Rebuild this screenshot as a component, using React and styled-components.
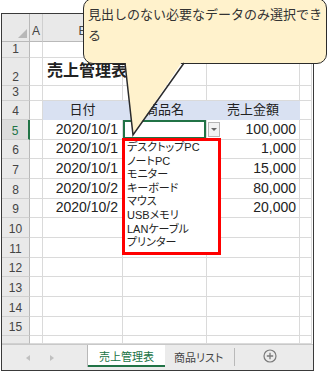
import React from 'react';
import styled, { createGlobalStyle } from 'styled-components';

const GlobalStyle = createGlobalStyle`
  body {
    margin: 0;
    background: #fff;
    font-family: "Liberation Sans", "Noto Sans CJK JP", sans-serif;
  }
`;

const COLS = '28px 13px 80px 84px 93px 12px';
const GREEN = '#217346';
const GRID = '#dadada';

const Page = styled.div`
  position: relative;
  width: 328px;
  height: 372px;
  padding: 13px 0 0 1px;
  box-sizing: border-box;
  overflow: hidden;
`;

const Frame = styled.div`
  width: 313px;
  height: 358px;
  box-sizing: border-box;
  border: 1px solid #3a3a3a;
  display: flex;
  flex-direction: column;
  background: #fff;
`;

const Sheet = styled.div`
  flex: 1;
  overflow: hidden;
`;

const Row = styled.div`
  display: grid;
  grid-template-columns: ${COLS};
  height: ${(p) => p.$h}px;
`;

const Corner = styled.div`
  background: #e9e9e9;
  border-right: 1px solid #b9b9b9;
  border-bottom: 1px solid #b9b9b9;
  box-sizing: border-box;
  display: flex;
  align-items: flex-end;
  justify-content: flex-end;
  padding: 0 2px 3px 0;
  &::after {
    content: '';
    border-left: 9px solid transparent;
    border-bottom: 9px solid #b8b8b8;
  }
`;

const ColHead = styled.div`
  background: ${(p) => (p.$active ? '#d6d6d6' : '#e9e9e9')};
  color: ${(p) => (p.$active ? GREEN : '#444')};
  border-right: 1px solid #cfcfcf;
  border-bottom: ${(p) => (p.$active ? `2px solid ${GREEN}` : '1px solid #b9b9b9')};
  box-sizing: border-box;
  display: flex;
  align-items: flex-end;
  justify-content: center;
  padding-bottom: 3px;
  font-size: 12px;
  overflow: hidden;
`;

const RowHead = styled.div`
  background: ${(p) => (p.$active ? '#dcdcdc' : '#e9e9e9')};
  color: ${(p) => (p.$active ? GREEN : '#444')};
  border-right: ${(p) => (p.$active ? `2px solid ${GREEN}` : '1px solid #b9b9b9')};
  border-bottom: 1px solid #d0d0d0;
  box-sizing: border-box;
  display: flex;
  align-items: flex-end;
  justify-content: center;
  padding-bottom: 2px;
  font-size: 12px;
  line-height: 12px;
  overflow: hidden;
`;

const Cell = styled.div`
  position: relative;
  box-sizing: border-box;
  border-right: 1px solid ${(p) => p.$fill || GRID};
  border-bottom: 1px solid ${(p) => p.$fill || GRID};
  background: ${(p) => p.$fill || 'transparent'};
  display: flex;
  align-items: flex-end;
  justify-content: ${(p) => p.$align || 'flex-start'};
  padding: 0 ${(p) => p.$padRight || 4}px 1px 4px;
  font-size: ${(p) => p.$size || 14}px;
  font-weight: ${(p) => (p.$bold ? 700 : 400)};
  line-height: ${(p) => (p.$bold ? 22 : 17)}px;
  color: #222;
  white-space: nowrap;
  ${(p) => p.$active && `box-shadow: inset 0 0 0 2px ${GREEN};`}
`;

const Title = styled.span`
  position: relative;
  z-index: 1;
  padding-bottom: 2px;
`;

const DropButton = styled.div`
  position: absolute;
  left: calc(100% + 2px);
  top: 2px;
  width: 12px;
  height: 15px;
  box-sizing: border-box;
  background: #f2f2f2;
  border: 1px solid #b5b5b5;
  display: flex;
  align-items: center;
  justify-content: center;
  z-index: 2;
  &::after {
    content: '';
    border-left: 3px solid transparent;
    border-right: 3px solid transparent;
    border-top: 3px solid #666;
  }
`;

const DropList = styled.ul`
  position: absolute;
  left: -1px;
  top: 18px;
  width: 99px;
  height: 117px;
  box-sizing: border-box;
  margin: 0;
  padding: 0 0 0 2px;
  list-style: none;
  background: #fff;
  border: 3px solid #ff0000;
  overflow: hidden;
  z-index: 2;
`;

const DropItem = styled.li`
  font-size: 11px;
  line-height: 13.6px;
  color: #222;
  font-feature-settings: "palt";
  white-space: nowrap;
`;

const Callout = styled.div`
  position: absolute;
  left: 83px;
  top: -2px;
  width: 244px;
  height: 66px;
  box-sizing: border-box;
  border: 1.5px solid #2b2b2b;
  border-radius: 10px;
  background: #fff2cc;
  padding: 5px 0 0 4px;
  font-size: 13px;
  line-height: 21px;
  color: #333;
  z-index: 3;
`;

const Tail = styled.svg`
  position: absolute;
  left: 0;
  top: 0;
  z-index: 4;
  pointer-events: none;
`;

const TabBar = styled.div`
  height: 26px;
  flex: none;
  display: flex;
  align-items: flex-start;
  background: #ebebeb;
  border-top: 1px solid #c8c8c8;
  box-sizing: border-box;
`;

const Nav = styled.div`
  width: 86px;
  height: 100%;
  display: flex;
  align-items: center;
  justify-content: center;
  gap: 20px;
  padding-right: 10px;
  box-sizing: border-box;
`;

const Arrow = styled.span`
  width: 0;
  height: 0;
  border-top: 3.5px solid transparent;
  border-bottom: 3.5px solid transparent;
  ${(p) =>
    p.$dir === 'left'
      ? 'border-right: 4px solid #c0c0c0;'
      : 'border-left: 4px solid #c0c0c0;'}
`;

const Tab = styled.div`
  height: 22px;
  box-sizing: border-box;
  display: flex;
  align-items: center;
  justify-content: center;
  padding: ${(p) => (p.$active ? '2px 0 0' : '2px 11px 0 9px')};
  width: ${(p) => (p.$active ? '77px' : 'auto')};
  background: ${(p) => (p.$active ? '#fff' : 'transparent')};
  color: ${(p) => (p.$active ? GREEN : '#444')};
  border-bottom: ${(p) => (p.$active ? `2px solid ${GREEN}` : 'none')};
  box-shadow: ${(p) => (p.$active ? '-1px 0 0 #b8b8b8' : 'none')};
  font-size: 11px;
  font-feature-settings: "palt";
`;

const Divider = styled.span`
  width: 1px;
  height: 18px;
  margin-top: 3px;
  background: #b9b9b9;
`;

const AddSheet = styled.svg`
  margin: 4px 0 0 28px;
`;

const rows = [
  { n: 1, h: 16 },
  { n: 2, h: 28, title: '売上管理表' },
  { n: 3, h: 15 },
  { n: 4, h: 19, head: ['日付', '商品名', '売上金額'] },
  { n: 5, h: 20, date: '2020/10/1', amount: '100,000', active: true },
  { n: 6, h: 19, date: '2020/10/1', amount: '1,000' },
  { n: 7, h: 20, date: '2020/10/1', amount: '15,000' },
  { n: 8, h: 20, date: '2020/10/2', amount: '80,000' },
  { n: 9, h: 19, date: '2020/10/2', amount: '20,000' },
  { n: 10, h: 20 },
  { n: 11, h: 20 },
  { n: 12, h: 19 },
  { n: 13, h: 20 },
  { n: 14, h: 20 },
  { n: 15, h: 19 },
  { n: '', h: 8 },
];

const items = [
  'デスクトップPC',
  'ノートPC',
  'モニター',
  'キーボード',
  'マウス',
  'USBメモリ',
  'LANケーブル',
  'プリンター',
];

const HEAD_FILL = '#d9e1f2';

function SheetRow({ row }) {
  if (row.head) {
    return (
      <Row $h={row.h}>
        <RowHead>{row.n}</RowHead>
        <Cell />
        {row.head.map((t) => (
          <Cell key={t} $fill={HEAD_FILL} $align="center" $size={13}>
            {t}
          </Cell>
        ))}
        <Cell />
      </Row>
    );
  }
  return (
    <Row $h={row.h}>
      <RowHead $active={row.active}>{row.n}</RowHead>
      <Cell />
      {row.title ? (
        <Cell $bold $size={16}>
          <Title>{row.title}</Title>
        </Cell>
      ) : (
        <Cell $align="flex-end">{row.date}</Cell>
      )}
      <Cell $active={row.active}>
        {row.active && (
          <>
            <DropButton />
            <DropList>
              {items.map((it) => (
                <DropItem key={it}>{it}</DropItem>
              ))}
            </DropList>
          </>
        )}
      </Cell>
      <Cell $align="flex-end" $padRight={3}>
        {row.amount}
      </Cell>
      <Cell />
    </Row>
  );
}

export default function App() {
  return (
    <Page>
      <GlobalStyle />
      <Frame>
        <Sheet>
          <Row $h={28}>
            <Corner />
            <ColHead>A</ColHead>
            <ColHead>B</ColHead>
            <ColHead $active>C</ColHead>
            <ColHead>D</ColHead>
            <ColHead>E</ColHead>
          </Row>
          {rows.map((r, i) => (
            <SheetRow key={i} row={r} />
          ))}
        </Sheet>
        <TabBar>
          <Nav>
            <Arrow $dir="left" />
            <Arrow $dir="right" />
          </Nav>
          <Tab $active>売上管理表</Tab>
          <Tab>商品リスト</Tab>
          <Divider />
          <AddSheet width="14" height="14" viewBox="0 0 14 14">
            <circle cx="7" cy="7" r="6" fill="none" stroke="#7a7a7a" strokeWidth="1.2" />
            <path d="M7 3.8v6.4M3.8 7h6.4" stroke="#7a7a7a" strokeWidth="1.3" />
          </AddSheet>
        </TabBar>
      </Frame>
      <Callout>見出しのない必要なデータのみ選択できる</Callout>
      <Tail width="328" height="140">
        <polygon points="125,59 133,135 184,59" fill="#fff2cc" />
        <polyline points="125,63 133,135 184,63" fill="none" stroke="#2b2b2b" strokeWidth="1.5" strokeLinejoin="miter" />
      </Tail>
    </Page>
  );
}
